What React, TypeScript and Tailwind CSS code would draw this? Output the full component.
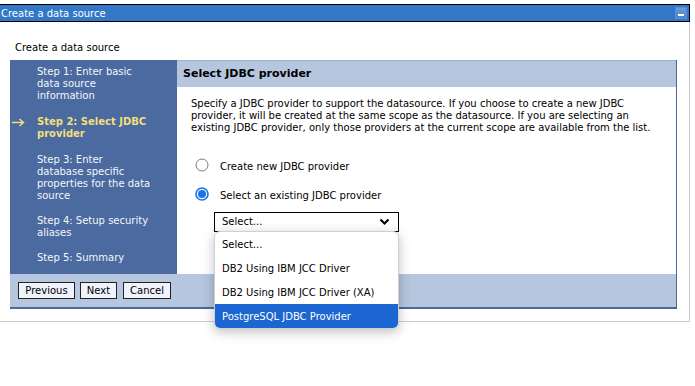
import React from "react";

function Radio({ checked }: { checked?: boolean }) {
  return checked ? (
    <svg width="14" height="14" viewBox="0 0 14 14" className="shrink-0">
      <circle cx="7" cy="7" r="6" fill="white" stroke="#1a73e8" strokeWidth="1.6" />
      <circle cx="7" cy="7" r="4" fill="#1a73e8" />
    </svg>
  ) : (
    <svg width="14" height="14" viewBox="0 0 14 14" className="shrink-0">
      <circle cx="7" cy="7" r="6" fill="white" stroke="#7a7a7a" strokeWidth="1" />
    </svg>
  );
}

function Step({ active, children }: { active?: boolean; children: React.ReactNode }) {
  return (
    <div className="flex">
      <div className="w-[27px] shrink-0 pl-[2px] pt-[2px]">
        {active ? (
          <svg width="13" height="9" viewBox="0 0 13 9">
            <path d="M0 4.5 H11 M7.5 1 L11.5 4.5 L7.5 8" fill="none" stroke="#f2df7c" strokeWidth="1.5" />
          </svg>
        ) : null}
      </div>
      <div className={"w-[114px] leading-[12px] " + (active ? "font-bold text-[#f2df7c]" : "text-[#f4f6fa]")}>{children}</div>
    </div>
  );
}

export default function App() {
  return (
    <div className="w-[695px] h-[386px] bg-white font-['DejaVu_Sans',_sans-serif] text-[10px] text-black overflow-hidden">
      <div className="pt-[4px]">
        <div className="w-[690px] h-[18px] bg-[#3277c8] border-y border-r border-black flex items-center justify-between text-white">
          <span className="leading-[12px] pl-[1px] pt-[1px]">Create a data source</span>
          <div className="w-[12px] h-[12px] mr-[2px] bg-gradient-to-b from-[#6c9ad6] to-[#4a82c9] border border-[#5d8fd0] flex items-end justify-center pb-[2px]">
            <div className="w-[6px] h-[2px] bg-white" />
          </div>
        </div>
      </div>
      <div className="w-[690px] h-[300px] border-r border-b border-[#cccccc] pt-[20px]">
        <div className="pl-[15px] leading-[12px]">Create a data source</div>
        <div className="ml-[10px] mt-[6px] w-[667px] border-r border-b-2 border-[#4b69a0]">
          <div className="flex h-[214px]">
            <div className="w-[167px] bg-[#4b6aa0] pt-[6px] flex flex-col gap-[14px]">
              <Step>Step 1: Enter basic data source information</Step>
              <Step active>Step 2: Select JDBC provider</Step>
              <Step>Step 3: Enter database specific properties for the data source</Step>
              <div className="flex flex-col gap-[13px] -mt-[1px]">
                <Step>Step 4: Setup security aliases</Step>
                <Step>Step 5: Summary</Step>
              </div>
            </div>
            <div className="flex-1 bg-white relative">
              <div className="h-[27px] bg-[#b5c6de] border-t border-[#9fb2d0] flex items-center pl-[6px] font-bold text-[11px]">Select JDBC provider</div>
              <p className="pl-[14px] pr-[8px] mt-[11px] leading-[12px]">
                Specify a JDBC provider to support the datasource. If you choose to create a new JDBC provider, it will be created at the same scope as the datasource. If you are selecting an existing JDBC provider, only those providers at the current scope are available from the list.
              </p>
              <div className="pl-[18px] mt-[23px] flex items-center gap-[11px]">
                <Radio />
                <span className="leading-[12px] pt-[4px]">Create new JDBC provider</span>
              </div>
              <div className="pl-[18px] mt-[13px] flex items-center gap-[11px]">
                <Radio checked />
                <span className="leading-[12px] pt-[4px]">Select an existing JDBC provider</span>
              </div>
              <div className="ml-[37px] mt-[10px] w-[185px] h-[20px] border border-black flex items-center justify-between pl-[7px] pr-[8px]">
                <span className="leading-[12px]">Select...</span>
                <svg width="11" height="8" viewBox="0 0 11 8">
                  <path d="M1.5 1.5 L5.5 5.5 L9.5 1.5" fill="none" stroke="black" strokeWidth="2.2" />
                </svg>
              </div>
            </div>
          </div>
          <div className="h-[33px] bg-[#b5c6de] flex items-center gap-[5px] pl-[8px]">
            <button className="w-[57px] h-[17px] bg-[#eef3fc] border border-[#222] leading-[12px] text-center">Previous</button>
            <button className="w-[37px] h-[17px] bg-[#eef3fc] border border-[#222] leading-[12px] text-center">Next</button>
            <button className="w-[48px] h-[17px] ml-[1px] bg-[#eef3fc] border border-[#222] leading-[12px] text-center">Cancel</button>
          </div>
        </div>
      </div>
      <div className="absolute left-[214px] top-[231px] w-[185px] bg-white rounded-[6px] border border-[#d0d0d0] shadow-[0_3px_12px_rgba(0,0,0,0.25)] overflow-hidden">
        <div className="h-[24px] flex items-center pl-[7px]">Select...</div>
        <div className="h-[24px] flex items-center pl-[7px]">DB2 Using IBM JCC Driver</div>
        <div className="h-[24px] flex items-center pl-[7px]">DB2 Using IBM JCC Driver (XA)</div>
        <div className="h-[24px] flex items-center pl-[7px] bg-[#1b66d0] text-white">PostgreSQL JDBC Provider</div>
      </div>
    </div>
  );
}
